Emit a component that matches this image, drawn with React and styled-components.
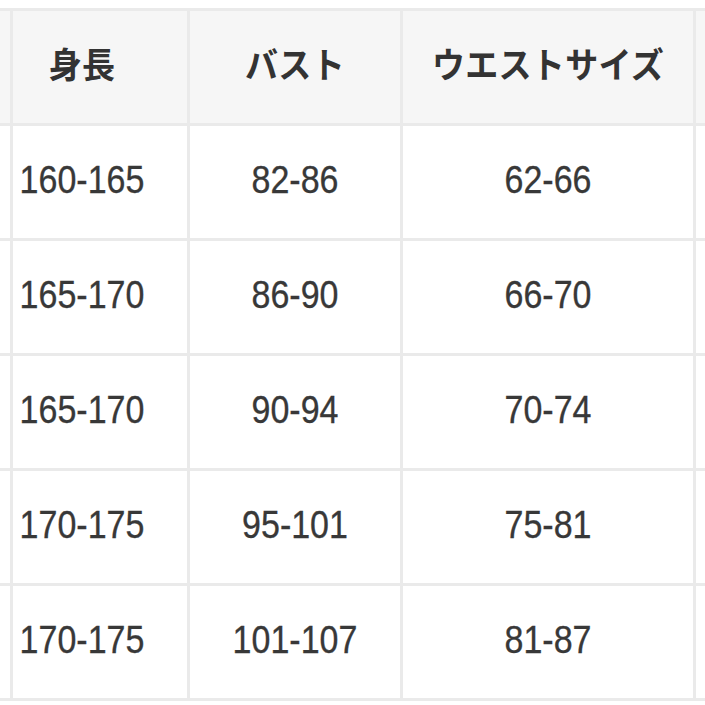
import React from "react";
import styled, { createGlobalStyle } from "styled-components";

const Global = createGlobalStyle`
  html, body { margin: 0; padding: 0; background: #fff; overflow: hidden; }
  body { font-family: "Liberation Sans", Arial, "Noto Sans CJK JP", sans-serif; }
`;

const Page = styled.div`
  width: 705px;
  height: 705px;
  overflow: hidden;
  padding-top: 8px;
  box-sizing: border-box;
  background: #fff;
`;

const Grid = styled.div`
  display: grid;
  grid-template-columns: 10px 174px 210px 290px 60px;
  grid-auto-rows: 112px;
  gap: 3px;
  padding: 3px 0;
  background: #eaeaea;
  width: 756px;
`;

const Cell = styled.div`
  display: flex;
  align-items: center;
  justify-content: center;
  background: ${(p) => (p.$head ? "#f6f6f6" : "#ffffff")};
  color: #333;
  padding-right: ${(p) => (p.$first ? "36px" : "0")};
  padding-bottom: ${(p) => (p.$head ? "8px" : "6px")};
  box-sizing: border-box;
  min-width: 0;
  overflow: hidden;
`;

const HeadText = styled.span`
  font-family: "Noto Sans CJK JP", "Noto Sans", sans-serif;
  font-weight: 700;
  font-size: 33px;
  letter-spacing: 0.3px;
  color: #333;
  display: inline-block;
  transform: scaleY(1.08);
`;

const NumText = styled.span`
  font-family: "Liberation Sans", Arial, sans-serif;
  font-size: 34px;
  color: #383838;
  display: inline-block;
  transform: scaleY(1.14);
  -webkit-text-stroke: 0.3px #383838;
`;

const headers = ["身長", "バスト", "ウエストサイズ"];
const rows = [
  ["160-165", "82-86", "62-66"],
  ["165-170", "86-90", "66-70"],
  ["165-170", "90-94", "70-74"],
  ["170-175", "95-101", "75-81"],
  ["170-175", "101-107", "81-87"],
];

export default function App() {
  return (
    <>
      <Global />
      <Page>
        <Grid>
          <Cell $head />
          {headers.map((h, i) => (
            <Cell $head key={h} $first={i === 0}>
              <HeadText>{h}</HeadText>
            </Cell>
          ))}
          <Cell $head />
          {rows.map((r, ri) => (
            <React.Fragment key={ri}>
              <Cell />
              {r.map((v, i) => (
                <Cell key={i} $first={i === 0}>
                  <NumText>{v}</NumText>
                </Cell>
              ))}
              <Cell />
            </React.Fragment>
          ))}
        </Grid>
      </Page>
    </>
  );
}
